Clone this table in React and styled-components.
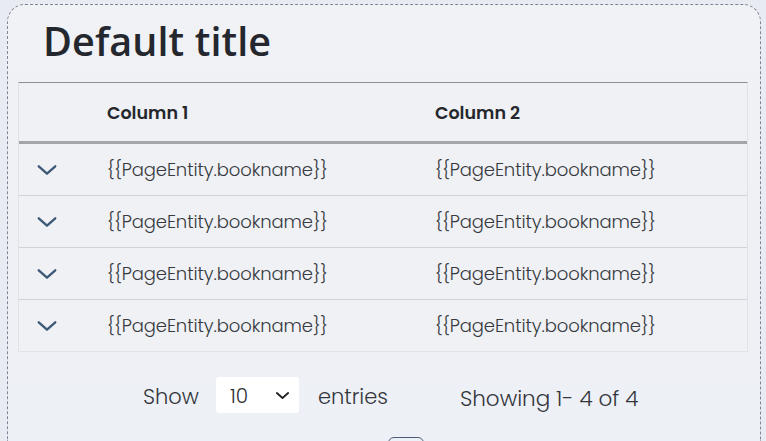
import React from "react";
import styled, { createGlobalStyle } from "styled-components";

const GlobalStyle = createGlobalStyle`
  html, body {
    margin: 0;
    padding: 0;
    background: #e8ebf2;
    font-family: "Open Sans", "Noto Sans", sans-serif;
  }
  #root {
    height: 441px;
    overflow: hidden;
  }
`;

const Page = styled.div`
  padding: 4px 5px 0 7px;
  height: 441px;
  box-sizing: border-box;
`;

const Card = styled.div`
  border: 1px dashed #7d8595;
  border-bottom: none;
  border-radius: 18px 18px 0 0;
  background: linear-gradient(180deg, #f1f2f5 0%, #eef0f5 60%, #edf0f6 100%);
  height: 100%;
  box-sizing: border-box;
  padding: 0 12px 0 10px;
  display: flex;
  flex-direction: column;
  overflow: hidden;
  & > * {
    flex-shrink: 0;
  }
`;

const Title = styled.h1`
  margin: 0;
  padding: 10px 0 0 25px;
  height: 77px;
  box-sizing: border-box;
  font-family: "Open Sans", sans-serif;
  font-weight: 600;
  font-size: 39.5px;
  line-height: 52px;
  color: #24272e;
  letter-spacing: 0.1px;
`;

const Table = styled.div`
  border-top: 1px solid #8c8f95;
  border-left: 1px solid #dfe2e8;
  border-right: 1px solid #dfe2e8;
  background: #eff1f5;
`;

const Row = styled.div`
  display: grid;
  grid-template-columns: 70px 328px 1fr;
  align-items: center;
  height: ${(p) => (p.$head ? "58px" : "51px")};
  border-bottom: ${(p) => (p.$head ? "3px solid #a3a5aa" : `1px solid ${p.$last ? "#e1e3e8" : "#cfd2d8"}`)};
`;

const Cell = styled.div`
  padding-left: 18px;
  padding-top: ${(p) => (p.$head ? "2px" : "0")};
  font-family: "Poppins", "Inter", "Noto Sans", sans-serif;
  font-size: ${(p) => (p.$head ? "17.5px" : "18px")};
  font-weight: ${(p) => (p.$head ? 600 : 300)};
  color: ${(p) => (p.$head ? "#25272c" : "#383a40")};
  letter-spacing: ${(p) => (p.$head ? "0" : "-0.1px")};
  white-space: nowrap;
`;

const ToggleCell = styled.div`
  display: flex;
  justify-content: center;
  padding-right: 15px;
  padding-top: 1px;
`;

const Footer = styled.div`
  display: flex;
  align-items: center;
  height: 85px;
  box-sizing: border-box;
  padding: 4px 0 0 125px;
  font-family: "Poppins", "Inter", "Noto Sans", sans-serif;
  color: #34363c;
  font-size: 21px;
  font-weight: 300;
`;

const Label = styled.span``;

const Select = styled.div`
  width: 83px;
  height: 36px;
  margin: 0 19px 4px 17px;
  background: #ffffff;
  border-radius: 3px;
  display: flex;
  align-items: center;
  justify-content: space-between;
  padding: 2px 9px 0 14px;
  box-sizing: border-box;
  font-size: 20px;
  font-weight: 300;
  color: #2c2e33;
`;

const Summary = styled.span`
  margin-left: 72px;
  font-size: 21.5px;
  font-weight: 300;
  padding-top: 4px;
`;

const Pager = styled.div`
  display: flex;
  justify-content: center;
  padding-left: 46px;
`;

const PageButton = styled.div`
  width: 36px;
  height: 36px;
  border: 1.5px solid #4d5d75;
  border-radius: 6px;
  box-sizing: border-box;
`;

const Chevron = ({ size = 22, color = "#3f5a77", stroke = 2.6 }) => (
  <svg width={size} height={size} viewBox="0 0 24 24" fill="none">
    <path d="M3 8l9 8 9-8" stroke={color} strokeWidth={stroke} strokeLinecap="round" strokeLinejoin="round" />
  </svg>
);

const rows = [1, 2, 3, 4];

const App = () => {
  return (
    <>
      <GlobalStyle />
      <Page>
        <Card>
          <Title>Default title</Title>
          <Table>
            <Row $head>
              <Cell $head></Cell>
              <Cell $head>Column 1</Cell>
              <Cell $head>Column 2</Cell>
            </Row>
            {rows.map((r, i) => (
              <Row key={r} $last={i === rows.length - 1}>
                <ToggleCell>
                  <Chevron />
                </ToggleCell>
                <Cell>{"{{PageEntity.bookname}}"}</Cell>
                <Cell>{"{{PageEntity.bookname}}"}</Cell>
              </Row>
            ))}
          </Table>
          <Footer>
            <Label>Show</Label>
            <Select>
              <span>10</span>
              <Chevron size={15} color="#222" stroke={3} />
            </Select>
            <Label>entries</Label>
            <Summary>Showing 1- 4 of 4</Summary>
          </Footer>
          <Pager>
            <PageButton />
          </Pager>
        </Card>
      </Page>
    </>
  );
};

export default App;
